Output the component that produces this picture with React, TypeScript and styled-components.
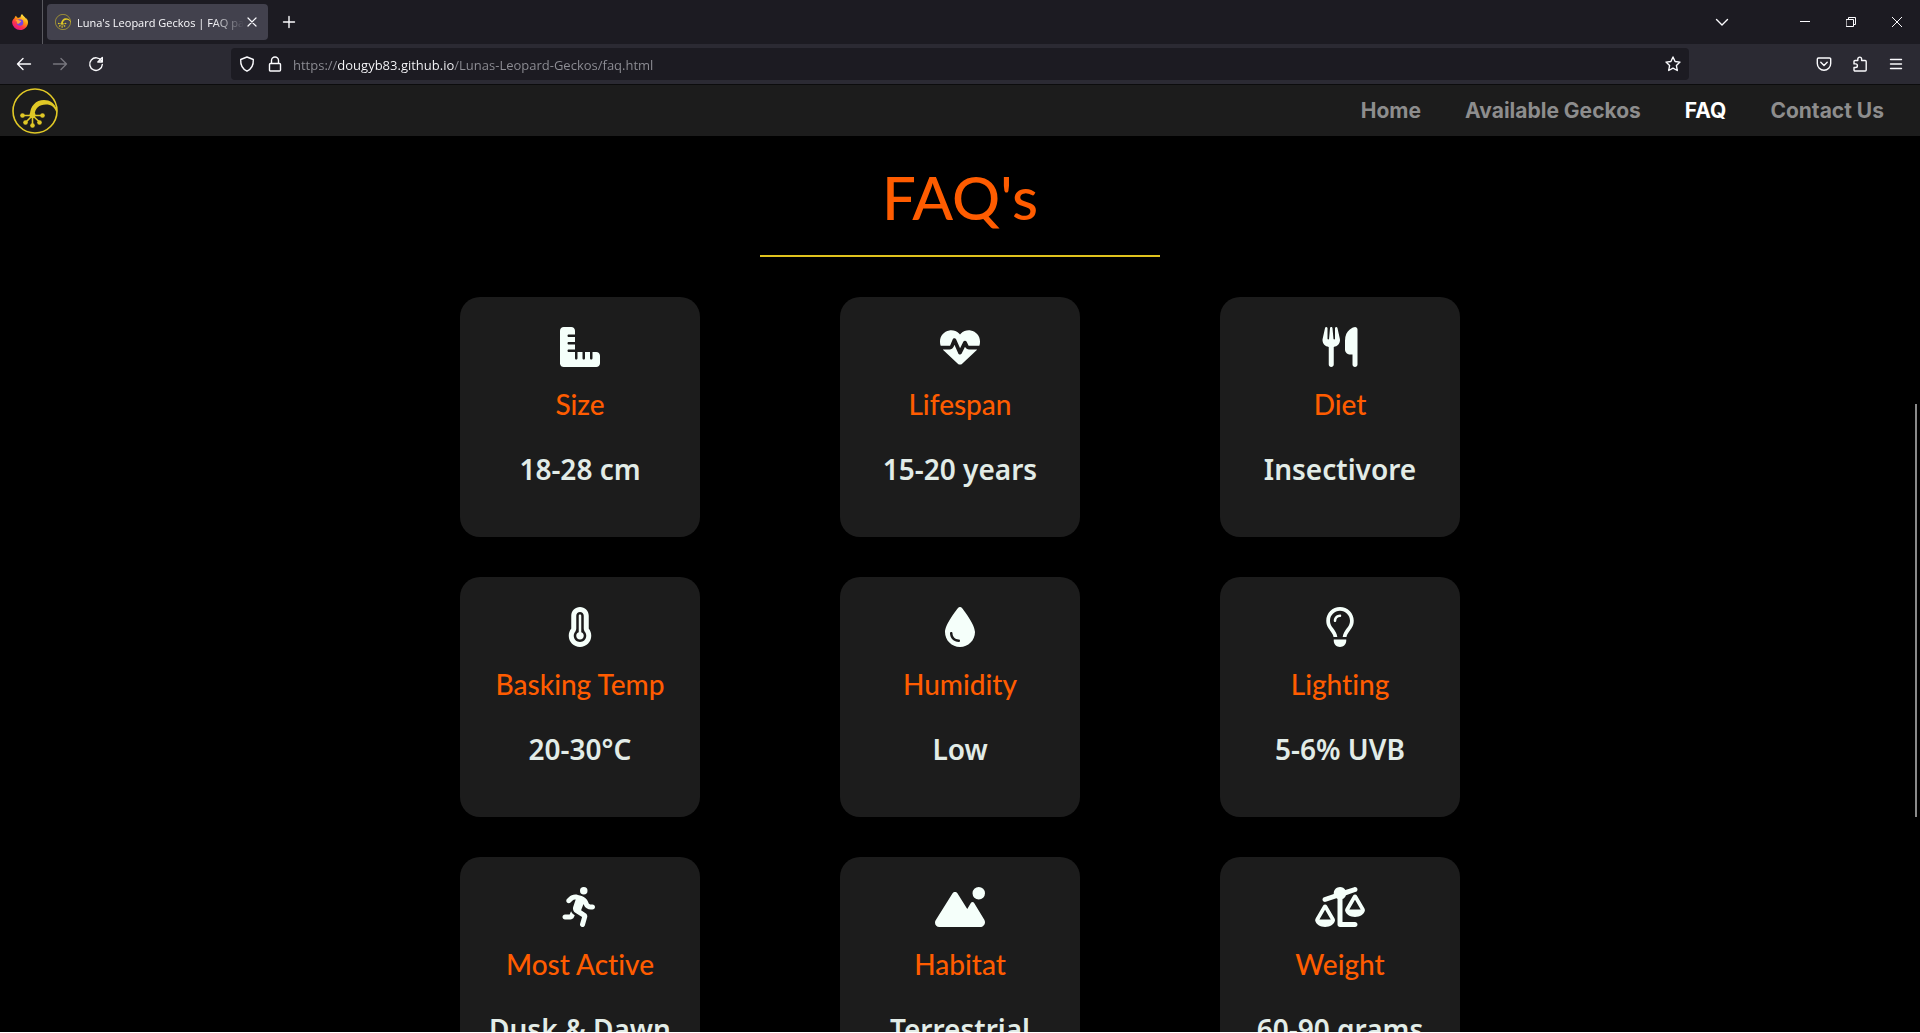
import React from "react";
import styled, { createGlobalStyle } from "styled-components";
import {
  FaRulerCombined,
  FaHeartPulse,
  FaUtensils,
  FaTemperatureFull,
  FaDroplet,
  FaRegLightbulb,
  FaPersonRunning,
  FaMountainSun,
  FaScaleUnbalanced,
} from "react-icons/fa6";

const GlobalStyle = createGlobalStyle`
  * { box-sizing: border-box; }
  body { margin: 0; background: #000; }
  button { padding: 0; border: 0; background: none; color: inherit; font: inherit; }
  h1, h2, p { margin: 0; }
`;

const Window = styled.div`
  display: flex;
  flex-direction: column;
  height: 100vh;
  overflow: hidden;
  border-bottom: 1px solid #fff;
  background: #000;
  color: #fbfbfe;
  font-family: "Open Sans", "Noto Sans", sans-serif;
`;

const TabStrip = styled.div`
  display: flex;
  align-items: center;
  flex: none;
  height: 44px;
  background: #1c1b22;
`;

const Pinned = styled.div`
  display: flex;
  align-items: center;
  justify-content: flex-end;
  width: 43px;
  height: 44px;
  padding-right: 14px;
  border-right: 1px solid #5a5a60;
`;

const Tab = styled.div`
  display: flex;
  align-items: center;
  width: 221px;
  height: 36px;
  margin-left: 4px;
  padding: 0 8px;
  border-radius: 4px;
  background: #42414d;
`;

const TabTitle = styled.span`
  flex: 1;
  min-width: 0;
  margin-left: 6px;
  overflow: hidden;
  white-space: nowrap;
  font-size: 11px;
  line-height: 20px;
  padding-top: 2px;
  mask-image: linear-gradient(to left, transparent, #000 32px);
`;

const IconButton = styled.button<{ $width: number; $dim?: boolean }>`
  display: flex;
  align-items: center;
  justify-content: center;
  flex: none;
  width: ${(p) => p.$width}px;
  height: 32px;
  color: ${(p) => (p.$dim ? "#77767e" : "#fbfbfe")};
`;

const TabClose = styled(IconButton)`
  height: 16px;
`;

const Spacer = styled.div`
  flex: 1;
`;

const WindowControls = styled.div`
  display: flex;
  margin-left: 37px;
`;

const Toolbar = styled.div`
  display: flex;
  align-items: center;
  flex: none;
  height: 41px;
  padding: 0 6px;
  background: #2b2a33;
  border-bottom: 1px solid #0c0c0d;
`;

const AddressBar = styled.div`
  display: flex;
  align-items: center;
  flex: 1;
  height: 32px;
  margin: 0 117px;
  padding-left: 2px;
  border-radius: 4px;
  background: #1c1b22;
`;

const AddressInput = styled.input`
  flex: 1;
  min-width: 0;
  height: 24px;
  margin-left: 4px;
  padding: 2px 0 0;
  border: 0;
  outline: 0;
  color: #fbfbfe;
  font-family: inherit;
  font-size: 13px;
  background: linear-gradient(to right, #8f8f96 45px, #fbfbfe 45px 161px, #8f8f96 161px);
  background-clip: text;
  -webkit-background-clip: text;
  -webkit-text-fill-color: transparent;
`;

const Page = styled.div`
  position: relative;
  flex: 1;
  min-height: 0;
  overflow: hidden;
`;

const SiteHeader = styled.header`
  display: flex;
  align-items: center;
  justify-content: space-between;
  height: 51px;
  padding: 0 36px 0 12px;
  background: #1c1c1c;
`;

const LogoLink = styled.a`
  display: flex;
`;

const Nav = styled.nav`
  display: flex;
  gap: 44px;
`;

const NavLink = styled.a<{ $active?: boolean }>`
  color: ${(p) => (p.$active ? "#fff" : "#8d8d8d")};
  font-family: Inter, "Open Sans", sans-serif;
  font-size: 21px;
  font-weight: 700;
  line-height: 28px;
  text-decoration: none;
`;

const Main = styled.main`
  display: flex;
  flex-direction: column;
  align-items: center;
`;

const Heading = styled.h1`
  padding: 24px 0 20px;
  color: #ff5c00;
  font-family: Lato, sans-serif;
  font-size: 60px;
  font-weight: 500;
  line-height: 75px;
`;

const Rule = styled.hr`
  width: 400px;
  height: 2px;
  margin: 0 0 40px;
  border: 0;
  background: #e0c31e;
`;

const CardGrid = styled.section`
  display: grid;
  grid-template-columns: repeat(3, 240px);
  gap: 40px 140px;
`;

const Card = styled.article<{ $iconWidth: number }>`
  display: flex;
  flex-direction: column;
  align-items: center;
  height: 240px;
  padding-top: 30px;
  border-radius: 20px;
  background: #1c1c1c;
  color: #f5fffa;

  svg {
    flex: none;
    width: ${(p) => p.$iconWidth}px;
    height: 40px;
  }
`;

const CardTitle = styled.h2`
  margin-top: 20px;
  color: #ff5c00;
  font-family: Lato, sans-serif;
  font-size: 28px;
  font-weight: 500;
  font-variant-ligatures: none;
  line-height: 34px;
`;

const CardValue = styled.p`
  margin-top: 30px;
  color: #e2ece7;
  font-family: "Noto Sans", sans-serif;
  font-size: 28px;
  font-weight: 600;
  line-height: 36px;
`;

const ScrollThumb = styled.div`
  position: absolute;
  top: 319px;
  right: 3px;
  width: 2px;
  height: 413px;
  background: #8a8a8a;
`;

function GeckoLogo({ size }: { size: number }) {
  return (
    <svg width={size} height={size} viewBox="0 0 46 46" fill="none" stroke="#e0c826">
      <circle cx="23" cy="23" r="22" strokeWidth="1.6" />
      <path
        d="M18 27C18 18 24 12 32 12c6 0 10 3 13 9l-.5 4C43 19 39 16.500 34 16.500c-7 0-11 4-11.500 10.500z"
        fill="#e0c826"
        stroke="none"
      />
      <path d="M20.500 27.500H11M20.500 27.500h10M20.500 27.500 14 34M20.500 27.500l7 6.500M20.500 26v10" strokeWidth="1.6" />
      <g fill="#e0c826" stroke="none">
        <circle cx="10.5" cy="27.5" r="2.3" />
        <circle cx="30.5" cy="27.5" r="2.3" />
        <circle cx="13.5" cy="34.5" r="2.3" />
        <circle cx="27.5" cy="34.5" r="2.3" />
        <circle cx="20.5" cy="37.5" r="2.3" />
        <circle cx="20.5" cy="27" r="3" />
      </g>
    </svg>
  );
}

function FirefoxLogo() {
  return (
    <svg width="16" height="16" viewBox="0 0 16 16">
      <defs>
        <linearGradient id="fox" x1="13" y1="1" x2="4" y2="15" gradientUnits="userSpaceOnUse">
          <stop offset="0" stopColor="#fff44f" />
          <stop offset=".4" stopColor="#ff980e" />
          <stop offset=".7" stopColor="#ff3647" />
          <stop offset="1" stopColor="#e31587" />
        </linearGradient>
      </defs>
      <path
        fill="url(#fox)"
        d="M15.600 6.200c-.4-1-1.200-2-1.900-2.400.5.700.8 1.500.8 2C13.500 3.200 11.300 2.300 10 0 9 .7 8.600 2 8.500 3.200c-1 .1-1.800.4-2.500.8C5 3.500 4.300 2.700 4 1.800c-.8.6-1.400 1.500-1.600 2.500C1.200 5.300.2 6.500.1 8.500A7.900 7.900 0 0 0 8 16c4.400 0 8-3.300 8-7.800 0-.7-.2-1.500-.4-2z"
      />
      <circle cx="8" cy="8.5" r="3.3" fill="#7542e5" />
      <path fill="#ffa436" d="M3.500 6.200c1-.8 3-.8 4 .3l1.800.4c-.1 1-1.600 1.400-2 2.300-.7 1-2.300.7-2.300-.4 0-1.200-.5-2-1.500-2.600z" />
    </svg>
  );
}

function Glyph({ children, size = 16, weight = 1.4 }: { children: React.ReactNode; size?: number; weight?: number }) {
  return (
    <svg
      width={size}
      height={size}
      viewBox={`0 0 ${size} ${size}`}
      fill="none"
      stroke="currentColor"
      strokeWidth={weight}
      strokeLinecap="round"
      strokeLinejoin="round"
    >
      {children}
    </svg>
  );
}

const facts = [
  { Icon: FaRulerCombined, iconWidth: 40, title: "Size", value: "18-28 cm" },
  { Icon: FaHeartPulse, iconWidth: 40, title: "Lifespan", value: "15-20 years" },
  { Icon: FaUtensils, iconWidth: 40, title: "Diet", value: "Insectivore" },
  { Icon: FaTemperatureFull, iconWidth: 40, title: "Basking Temp", value: "20-30°C" },
  { Icon: FaDroplet, iconWidth: 40, title: "Humidity", value: "Low" },
  { Icon: FaRegLightbulb, iconWidth: 40, title: "Lighting", value: "5-6% UVB" },
  { Icon: FaPersonRunning, iconWidth: 40, title: "Most Active", value: "Dusk & Dawn" },
  { Icon: FaMountainSun, iconWidth: 50, title: "Habitat", value: "Terrestrial" },
  { Icon: FaScaleUnbalanced, iconWidth: 50, title: "Weight", value: "60-90 grams" },
];

const links = ["Home", "Available Geckos", "FAQ", "Contact Us"];

export default function App() {
  return (
    <Window>
      <GlobalStyle />
      <TabStrip>
        <Pinned>
          <FirefoxLogo />
        </Pinned>
        <Tab>
          <GeckoLogo size={16} />
          <TabTitle>Luna's Leopard Geckos | FAQ page</TabTitle>
          <TabClose $width={16} aria-label="Close tab">
            <Glyph weight={1.2}><path d="m4 4 8 8m0-8-8 8" /></Glyph>
          </TabClose>
        </Tab>
        <IconButton $width={42} aria-label="New tab">
          <Glyph><path d="M8 2.500v11M2.500 8h11" /></Glyph>
        </IconButton>
        <Spacer />
        <IconButton $width={46} aria-label="List all tabs">
          <Glyph><path d="m2.500 5.500 5.500 5.500 5.500-5.500" /></Glyph>
        </IconButton>
        <WindowControls>
          <IconButton $width={46} aria-label="Minimize">
            <Glyph size={10} weight={1}><path d="M0 4.500h10" strokeLinecap="butt" /></Glyph>
          </IconButton>
          <IconButton $width={46} aria-label="Restore">
            <Glyph size={10} weight={1}><path d="M.5 2.500h7v7h-7zM2.500 2.500v-2h7v7h-2" /></Glyph>
          </IconButton>
          <IconButton $width={46} aria-label="Close window">
            <Glyph size={10} weight={1}><path d="m0 0 10 10M10 0 0 10" /></Glyph>
          </IconButton>
        </WindowControls>
      </TabStrip>
      <Toolbar>
        <IconButton $width={36} aria-label="Back">
          <Glyph><path d="M14.500 8h-13M7 2.500 1.500 8 7 13.500" /></Glyph>
        </IconButton>
        <IconButton $width={36} $dim aria-label="Forward">
          <Glyph><path d="M1.500 8h13M9 2.500 14.500 8 9 13.500" /></Glyph>
        </IconButton>
        <IconButton $width={36} aria-label="Reload">
          <Glyph><path d="M13.500 5A6.300 6.300 0 1 0 14.300 8.500M14.300 1.500v4.500H9.800z" /></Glyph>
        </IconButton>
        <AddressBar>
          <IconButton $width={28} aria-label="Tracking protection">
            <Glyph><path d="M8 1 14.300 3.500C14.600 8.500 12.500 13 8 15.200 3.500 13 1.400 8.500 1.700 3.500z" /></Glyph>
          </IconButton>
          <IconButton $width={28} aria-label="Site information">
            <Glyph><path d="M3.500 7.500h9a1 1 0 0 1 1 1v5.500a1 1 0 0 1-1 1h-9a1 1 0 0 1-1-1V8.500a1 1 0 0 1 1-1zM4.500 7.500V4.500a3.500 3.500 0 0 1 7 0v3" /></Glyph>
          </IconButton>
          <AddressInput
            aria-label="Address"
            defaultValue="https://dougyb83.github.io/Lunas-Leopard-Geckos/faq.html"
          />
          <IconButton $width={32} aria-label="Bookmark this page">
            <Glyph><path d="m8 1 2.100 4.500 4.900.6-3.600 3.400.9 5L8 12.100l-4.300 2.400.9-5L1 6.100l4.900-.6z" /></Glyph>
          </IconButton>
        </AddressBar>
        <IconButton $width={36} aria-label="Save to Pocket">
          <Glyph><path d="M2.500 2h11a1.200 1.200 0 0 1 1.200 1.200V7.500a6.700 6.700 0 0 1-13.400 0V3.200A1.200 1.200 0 0 1 2.500 2zM4.800 6.300 8 9.400l3.200-3.100" /></Glyph>
        </IconButton>
        <IconButton $width={36} aria-label="Extensions">
          <Glyph><path d="M5.800 4.500V3a1.900 1.900 0 0 1 3.800 0v1.500h3.600a1 1 0 0 1 1 1v8.500a1 1 0 0 1-1 1H3a1 1 0 0 1-1-1v-2.500h1.600a1.800 1.800 0 0 0 0-3.600H2V5.500a1 1 0 0 1 1-1z" /></Glyph>
        </IconButton>
        <IconButton $width={36} aria-label="Open application menu">
          <Glyph><path d="M2.500 3.500h11M2.500 8h11M2.500 12.500h11" /></Glyph>
        </IconButton>
      </Toolbar>
      <Page>
        <SiteHeader>
          <LogoLink href="#home" aria-label="Luna's Leopard Geckos">
            <GeckoLogo size={46} />
          </LogoLink>
          <Nav>
            {links.map((label) => (
              <NavLink key={label} href="#" $active={label === "FAQ"}>
                {label}
              </NavLink>
            ))}
          </Nav>
        </SiteHeader>
        <Main>
          <Heading>FAQ's</Heading>
          <Rule />
          <CardGrid>
            {facts.map(({ Icon, iconWidth, title, value }) => (
              <Card key={title} $iconWidth={iconWidth}>
                <Icon aria-hidden />
                <CardTitle>{title}</CardTitle>
                <CardValue>{value}</CardValue>
              </Card>
            ))}
          </CardGrid>
        </Main>
        <ScrollThumb />
      </Page>
    </Window>
  );
}
